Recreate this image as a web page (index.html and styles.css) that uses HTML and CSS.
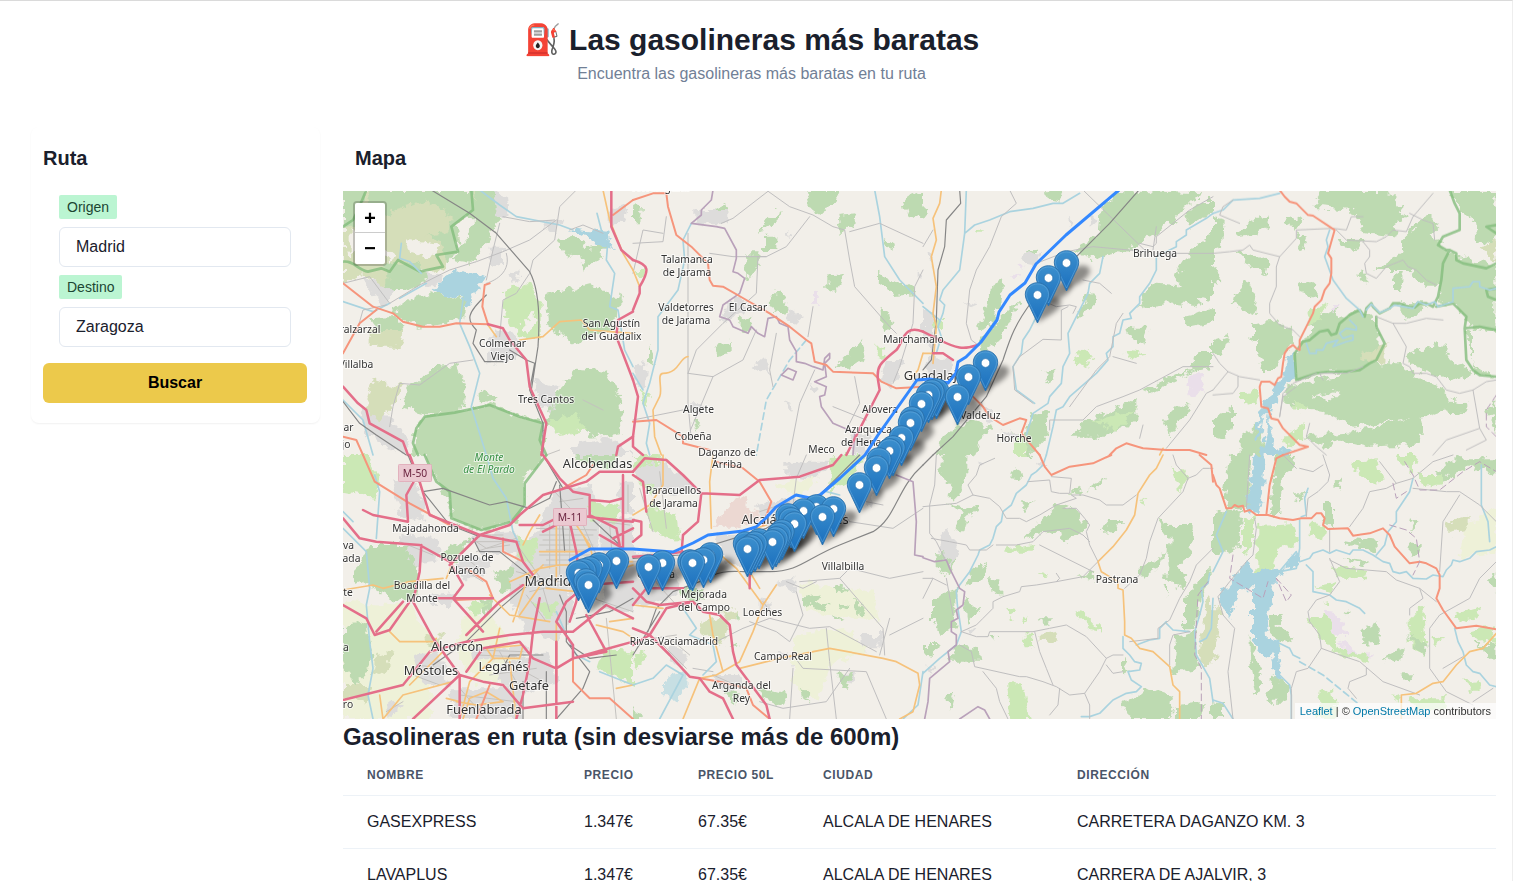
FILE: index.html
```html
<!DOCTYPE html>
<html lang="es">
<head>
<meta charset="utf-8">
<title>Las gasolineras más baratas</title>
<link rel="stylesheet" href="styles.css">
</head>
<body>
<div class="page">
<header class="hero"><h1>⛽ Las gasolineras más baratas</h1><p>Encuentra las gasolineras más baratas en tu ruta</p></header>
<main class="layout">
<aside class="card">
<h2>Ruta</h2>
<div class="fields">
<span class="tag">Origen</span><div class="input">Madrid</div>
<span class="tag">Destino</span><div class="input">Zaragoza</div>
</div>
<button class="buscar">Buscar</button>
</aside>
<section class="content">
<h2 class="map-title">Mapa</h2>
<div class="map">
<svg class="tiles" width="1153" height="528" viewBox="0 0 1153 528">
<defs>
<filter id="rough" filterUnits="userSpaceOnUse" x="-10" y="-10" width="1180" height="550"><feTurbulence type="fractalNoise" baseFrequency=".11" numOctaves="3" seed="4"/><feDisplacementMap in="SourceGraphic" scale="13" xChannelSelector="R" yChannelSelector="G"/></filter>
<filter id="blur" x="-50%" y="-50%" width="200%" height="200%"><feGaussianBlur stdDeviation="2.4"/></filter>
<linearGradient id="blue" x1="0" y1="0" x2="0" y2="1"><stop offset="0" stop-color="#3c8fcd"/><stop offset="1" stop-color="#1a6fbe"/></linearGradient>
<g id="pin"><path d="M0-12.3C-7-12.3-12.2-7-12.2-.6-12.2 3-10.4 6.3-8.7 9.6L0 28 8.7 9.6C10.4 6.3 12.2 3 12.2-.6 12.2-7 7-12.3 0-12.3Z" fill="url(#blue)" stroke="#2b72ab" stroke-width=".9"/><path d="M0-11C-6.4-11-11-6.2-11-.6-11 2.8-9.3 6-7.6 9.2L0 25 7.6 9.2C9.3 6 11 2.8 11-.6 11-6.2 6.4-11 0-11Z" fill="none" stroke="#64a9dc" stroke-width=".8" opacity=".7"/><circle r="4.4" fill="#fff" stroke="#2d76b4" stroke-width=".8"/></g>
<path id="shade" d="M0 28C2 18 3 10 8 6 14 0 24 2 24 8 23 16 10 21 0 28Z" opacity=".42"/>
</defs>
<g class="land" filter="url(#rough)">
<g transform="translate(0 -1) scale(.33333)">
<path class="h" d="M0 0H420L400 70 340 105 350 165 290 250 180 220 130 300 60 250 0 280Z"/>
<path class="f" d="M80 0H390L400 80 340 95 350 170 320 215 290 150 200 130 110 160 60 90ZM400 0H455L470 90 430 160 390 220 330 210 380 130ZM0 0H60V90L0 120ZM130 220 230 215 260 270 190 300 130 300Z"/>
<path class="h" d="M150 60 260 30 330 80 300 130 200 150 120 170 90 110Z"/>
<path class="e" d="M20 120 110 130 130 180 70 205 20 190ZM190 150 290 165 265 205 200 185ZM110 160 160 200 140 220Z"/>
<path class="u" d="M60 260 150 300 130 345 80 310ZM450 0 495 20 500 80 460 75ZM440 170 480 170 480 230 440 220ZM245 250 300 255 290 280 250 285ZM570 570 640 590 635 670 590 650ZM455 420 520 435 530 510 430 520 430 485ZM800 60 850 50 840 100 800 105ZM610 95 655 95 640 135 605 115ZM500 240 525 245 515 280ZM50 660 110 650 200 750 180 795 80 740ZM690 765 795 740 870 795H690Z"/>
<path class="w" d="M265 300 335 240 430 265 375 345 355 325 280 305ZM680 115 790 125 810 180 780 175 740 145Z"/>
<path class="f" d="M195 330 280 305 365 330 360 390 230 410 140 370ZM610 315 740 280 840 330 800 420 690 460 620 410ZM640 150 690 140 740 170 790 165 770 200 720 245 710 200 660 190ZM280 530 340 525 365 590 350 670 240 670 170 650 200 590ZM700 530 790 540 830 620 840 730 740 740 690 690 610 700 640 610ZM215 720 245 680 340 665 440 645 530 680 600 700V795H210ZM75 385 165 380 180 430 120 440ZM410 605 440 615 470 615 450 640 410 635Z"/>
<path class="h" d="M90 570 180 590 150 650 110 700 60 660ZM80 420 180 420 170 470 80 470Z"/>
<path class="g" d="M480 310 560 275 590 340 590 450 550 450 490 390ZM620 690 700 675 730 720 640 740Z"/>
<path class="e" d="M570 360 575 400 550 430 540 395Z"/>
</g>
<g transform="translate(290 -1) scale(.33333)">
<path class="f" d="M0 50 30 55 20 100 0 100ZM220 70 280 40 290 70 230 90ZM390 100 440 60 435 85 385 125ZM520 0 620 0 600 50 570 60 540 75ZM610 75 670 70 660 110 620 130ZM390 140 430 140 430 180 390 180ZM340 190 380 190 370 250 340 270ZM810 30 870 10V85L820 70ZM750 140 780 165 765 190ZM580 260 630 255 610 305 580 290ZM735 245 850 310 790 315 735 275ZM410 335 445 295 470 350 450 375 420 365ZM745 355 775 380 780 410 750 420ZM320 390 355 380 355 430 325 420ZM250 465 290 455 290 490 260 500ZM610 530 690 445 700 500 640 540ZM45 465 65 490 60 540 45 510ZM180 690 200 690 195 720Z"/>
<path class="u" d="M190 60 290 60 280 100 190 100ZM280 330 340 330 330 370 270 390ZM465 355 500 380 490 405 455 390ZM365 525 395 500 410 560ZM10 515 40 520 35 590 5 590ZM755 510 815 510 780 590 740 570ZM170 640 215 640 200 670ZM525 580 570 590 545 615ZM450 630 485 640 480 665ZM860 240V270L870 250ZM655 730 720 735 690 795 650 790ZM850 550H870V590H840ZM480 110 460 150 460 130Z"/>
<path class="l" d="M540 305 555 300 555 335 540 335Z"/>
<path class="g" d="M20 600 50 620 50 655 30 650ZM730 470 750 470 755 500 735 495ZM15 240 35 240 35 265 20 265Z"/>
</g>
<g transform="translate(580 -1) scale(.33333)">
<path class="f" d="M530 60 590 0 830 10 740 100 650 160 600 185 520 180ZM450 180 520 140 560 190 520 210ZM375 0 415 5 410 35 385 30ZM820 30 870 30V70L800 110 785 90ZM780 210 870 120V330L800 320 760 270ZM640 360 680 280 760 285 820 310 830 350 740 340 690 345ZM205 290 235 270 230 330 215 400 160 420 190 350ZM165 460 290 330 230 450 180 490ZM300 185 340 175 335 210 310 215ZM460 390 500 300 520 330 490 365ZM610 410 680 410 660 460 615 440ZM780 380 870 360V395L800 410ZM360 540 400 530 400 570 375 575ZM660 600 770 550 820 535 720 590 680 610ZM805 510 840 480 870 480V530L810 545ZM500 690 640 630 640 690 540 740 440 740ZM720 690 770 640 800 650 740 740ZM330 670 375 670 370 740 320 795H280L300 735ZM60 740 140 690 200 710 150 795H40ZM0 40 15 70 0 90Z"/>
<path class="g" d="M470 480 510 490 490 530 460 520ZM500 695 640 660 580 720ZM605 485 665 490 650 510 610 500ZM30 380 60 390 60 420 30 420ZM160 115 185 125 160 125ZM270 730 320 740 310 795H270Z"/>
<path class="u" d="M300 190 355 190 345 225 310 220ZM0 360 30 370 30 470 0 460ZM20 500 90 505 80 550 40 570 0 540ZM170 640 210 660 210 700 180 690ZM230 715 300 740 265 750ZM120 330 165 340 140 350ZM500 80 525 90 500 110ZM10 190 30 195 25 225ZM435 80 455 100 440 110Z"/>
<path class="l" d="M265 250 285 255 280 270ZM290 230 305 230 300 245ZM800 550 835 550 845 600 810 615 790 590Z"/>
</g>
<g transform="translate(870 -1) scale(.33333)">
<path class="f" d="M0 80 35 90 30 170 0 180ZM70 130 160 70 170 110 120 135 80 140ZM300 50 330 0H520L580 80 540 110 550 140 460 130 420 60ZM370 150 450 150 430 180 390 175ZM570 150 640 70 680 110 650 140 700 180 690 290 640 290 590 240 480 240 570 190ZM710 0H850V170L790 150 780 90 740 60ZM70 180 170 215 160 250 100 220ZM250 130 285 140 270 185ZM100 265 130 320 120 375 50 345ZM210 75 270 90 240 130ZM120 400 200 390 250 440 180 540 150 540 120 440ZM0 235 20 230 10 280 0 280ZM0 450 45 435 30 490 0 490ZM690 180 850 230V430L770 410 720 340 670 330ZM760 425 780 420V520L850 560 790 555ZM245 490 290 430 360 400 390 380 440 360 480 380 500 440 500 510 440 540 320 550 250 570ZM570 500 680 460 720 510 780 550 710 570 620 540ZM220 590 360 560 460 520 560 520 600 550 700 600 720 650 640 680 420 710 330 660 220 650ZM400 730 620 680 630 760 470 770 390 750ZM270 740 430 725 390 750 330 770ZM0 690 60 650 60 710 30 750 0 740ZM80 740 140 700 150 795H80ZM260 280 300 280 320 320 270 310ZM430 250 460 240 460 285ZM560 340 640 340 620 370 570 385ZM540 260 570 240 560 300 540 300ZM700 630 760 640 760 670 700 665ZM300 400 370 350 380 390 300 430ZM820 660 850 630V730Z"/>
<path class="e" d="M735 150 775 145 780 200 740 205ZM788 430 850 430V540L802 530ZM500 400 560 420 570 510 500 460ZM300 620 380 600 350 630Z"/>
<path class="h" d="M440 500 520 460 510 520ZM800 180 850 150V210Z"/>
<path class="g" d="M300 360 340 340 320 390 280 410ZM90 610 130 600 120 650 90 640ZM240 640 290 650 260 670ZM210 750 270 700 270 750 220 770Z"/>
<path class="l" d="M350 345 375 345 365 370Z"/>
<path class="w" d="M245 480 245 570 220 580 180 650 140 690 150 640 210 560 225 500ZM165 660 190 795H140L160 720ZM170 780 245 775 230 795H160ZM120 750 145 650 150 680 135 750Z"/>
</g>
<g transform="translate(0 264) scale(.33333)">
<path class="g" d="M0 0H70L110 60 100 130 0 110Z"/><path class="y" d="M0 440 200 450 270 560 260 792H0ZM360 480 440 480 560 630 500 680 400 680 340 590Z"/>
<path class="f" d="M245 0H560L600 0 540 70 550 130 510 200 415 225 330 200 320 140 280 80ZM80 270 230 270 220 430 160 440 30 370ZM320 270 390 250 330 320 280 300ZM455 350 540 330 530 400 470 410ZM0 510 70 500 90 600 40 700 0 620ZM690 0H830L800 40 720 20ZM410 430 450 430 430 480Z"/>
<path class="h" d="M100 600 150 590 120 660 90 650ZM0 690 90 690 70 740 0 720ZM240 550 300 540 290 590Z"/>
<path class="u" d="M145 80 200 70 250 140 240 200 170 180ZM380 240 520 230 540 290 460 300 410 290ZM520 300 590 210 640 100 740 90 770 190 760 330 680 360 690 470 640 560 540 520 500 410ZM340 310 450 310 420 370 350 370ZM210 600 290 590 320 690 240 700ZM380 580 560 570 540 610 390 610ZM770 190 870 190V470L780 460ZM470 630 610 590 650 680 540 720 470 690ZM320 700 540 700 530 792H330ZM250 420 340 410 330 450 260 450ZM830 80 870 80V180L830 170ZM170 240 290 250 280 320 210 330ZM130 740 180 750 130 792Z"/>
<path class="g" d="M520 250 580 260 570 330 530 310ZM730 140 830 150 820 200 750 190ZM560 440 650 450 620 490ZM780 580 870 590V690L760 640ZM360 450 430 445 400 490Z"/>
</g>
<g transform="translate(290 264) scale(.33333)">
<path class="g" d="M0 0H80L100 80 60 110 20 100ZM40 150 130 180 140 260 50 230ZM600 0H700L640 80 590 110ZM0 610 40 590 20 640Z"/>
<path class="y" d="M480 540 650 520 700 590 590 630 560 740 480 690ZM430 90 560 60 500 130ZM500 380 720 410 740 500 520 470Z"/>
<path class="u" d="M0 40 70 20 170 70 190 110 100 120 30 80ZM0 290 140 300 130 420 30 460 0 450ZM370 150 480 130 520 170 460 230 390 200ZM250 240 360 240 380 330 280 330ZM660 100 730 100 710 150ZM430 380 490 370 490 410ZM120 570 170 610 150 640 100 610ZM230 660 320 660 330 700 260 710ZM680 540 740 540 740 580 690 580ZM380 430 420 440 410 470 380 470ZM440 590 490 600 480 620 440 610ZM630 650 670 650 660 690ZM460 20 600 20 550 70 460 60Z"/>
<path class="i" d="M240 215 320 120 345 130 340 160 380 170 380 200 310 215Z"/>
<path class="f" d="M130 400 200 400 210 440 150 430ZM290 470 320 460 320 500ZM270 700 320 710 310 750ZM0 760 30 780 20 792H0ZM380 700 460 720 450 750 380 730ZM610 660 660 650 640 710ZM510 430 560 415 550 440 590 450 570 470 510 450ZM280 570 320 560 310 580ZM600 390 640 395 620 420ZM620 440 650 450 630 460ZM660 430 700 460 690 485 670 470ZM510 700 530 710 520 740ZM600 480 630 490 610 500Z"/>
<path class="h" d="M200 500 290 490 270 570 220 540ZM250 470 320 460 310 500Z"/>
<path class="w" d="M90 670 160 650 165 690 130 740 90 710Z" opacity=".6"/>
</g>
<g transform="translate(580 264) scale(.33333)">
<path class="f" d="M60 0H130V60L110 130 70 130 90 100 50 50ZM60 145 170 160 130 190 120 230 100 210 120 170ZM300 255 350 200 400 150 450 160 490 220 440 260 400 230 340 240ZM270 40 290 45 295 75 265 70ZM440 110 480 100 460 120ZM490 110 550 65 530 100ZM290 145 335 145 310 170ZM530 235 560 195 600 195 580 230ZM700 190 740 210 810 210 800 310 770 330 790 370 780 410 730 370 740 250ZM725 390 735 390 735 425ZM655 370 650 340 730 290 700 340 670 360ZM140 350 190 320 170 380 130 390ZM195 370 235 370 235 425 200 410ZM40 290 100 300 80 370 45 340ZM120 430 175 460 130 500ZM30 430 100 400 100 520 50 540 30 500ZM100 570 170 580 175 620 80 620ZM0 570 50 570 30 600 0 595ZM190 540 220 540 210 560ZM600 600 620 650 600 655ZM780 440 860 340H870L830 430 820 520 780 520ZM760 540 815 530 825 640 750 655ZM600 740 690 700 750 720 740 792H620ZM750 755 840 745 830 792H750ZM470 370 510 350 515 380ZM70 720 95 720 80 770ZM350 490 390 490 380 510Z"/>
<path class="g" d="M250 280 340 270 330 290 250 290ZM345 350 375 355 360 375ZM450 470 490 480 540 530 500 520ZM245 460 280 465 270 490ZM295 545 330 545 330 580 305 580ZM255 685 300 685 310 740 320 792H265ZM755 40 800 60 770 115ZM295 485 315 490 310 505ZM655 130 670 140 660 150Z"/>
<path class="h" d="M850 420 870 430V630H830ZM350 540 400 530 390 560 350 560Z"/>
<path class="u" d="M50 240 75 225 85 260 110 280 100 310 80 330 50 280ZM165 15 185 25 170 40ZM135 520 160 530 150 545ZM10 625 40 640 20 660ZM345 20 365 30 350 40Z"/>
</g>
<g transform="translate(870 264) scale(.33333)">
<path class="f" d="M50 0H115L105 160 50 160 30 120ZM185 0H245L240 40 210 60 205 180 170 180ZM0 170 90 165 80 270 20 300 0 300ZM330 140 360 140 360 220 330 190ZM240 115 285 115 260 145ZM360 90 385 60 380 110ZM670 40 740 10H850V60L760 30 700 75 670 80Z"/>
<path class="h" d="M700 200 770 180 770 230 700 240ZM0 470 20 450 15 540 0 630Z"/><path class="y" d="M760 210 850 160V290L740 310Z"/>
<path class="g" d="M130 210 240 205 250 260 190 290 180 350 130 350ZM90 190 120 190 120 270 90 300ZM290 200 340 210 330 250 290 240ZM415 20 490 10 510 80 470 85 420 40ZM610 60 690 60 690 90 630 100ZM355 330 460 345 450 370 370 360ZM310 395 380 380 350 410ZM280 490 340 480 360 530 380 580 470 605 470 620 370 600 310 530ZM590 500 630 450 640 610 590 560ZM720 480 805 455 790 490 740 500ZM770 530 840 510 850 570 790 560ZM650 545 690 550 670 580ZM755 680 800 675 800 710 770 710ZM320 710 360 700 370 792H310ZM525 715 560 720 560 740ZM590 730 700 730 690 770 610 760ZM325 440 345 435 345 455ZM550 0H610L600 60 560 20Z"/>
<path class="f" d="M165 480 210 480 190 510 240 550 200 570 170 530ZM110 540 150 690 130 720 110 600ZM180 660 230 700 220 740 160 740ZM455 520 490 505 505 565 450 570ZM505 610 570 575 560 610 530 620ZM590 270 620 260 620 300 590 310ZM820 370 850 355V410ZM580 540 640 560 640 610ZM565 655 600 655 590 680ZM390 470 410 475 400 490ZM0 745 30 750 30 792H0ZM600 190 620 200 590 230ZM790 570 850 570V620ZM390 250 500 260 480 285 410 270ZM380 310 470 320 450 330Z"/>
<path class="l" d="M335 470 370 475 400 540 365 540ZM380 550 440 600 390 585ZM460 600 485 595 470 610Z"/>
<path class="w" d="M125 0H155L150 110 135 180 100 165ZM15 425 100 320 120 340 120 400 80 400 50 500ZM120 350 210 340 190 370 180 440 160 480 165 550 200 560 195 600 210 680 190 670 180 610 140 590 120 560ZM240 300 265 290 265 320 230 350 210 340Z"/>
</g></g>
<g class="lines">
<g transform="translate(0 -1) scale(.33333)">
<path class="b" d="M0 215C30 210 45 240 75 245L115 235 140 245 165 210 230 245 300 230 280 195 345 185 325 110 390 60 385 0M0 110 30 90 45 60 70 0M225 795 210 760 220 715 245 680 335 668 440 645 530 680 600 700 590 750 610 795"/>
<path class="v" d="M410 0 470 45 520 80 650 105 690 120M235 250 200 215 170 205 175 160M762 70 775 120 795 150 790 210 815 250 800 350 825 360 845 480 870 530M360 330 350 400 380 470 410 550 385 650 430 795M140 340 90 365 0 335M170 325 250 280M0 630 60 690 90 795"/>
<path class="r" d="M700 0 650 50 635 150 570 210 560 250 520 310 480 330 470 440M640 90 560 150 480 185 400 215 320 240 230 285 140 340 80 260 0 280M470 100 450 180 430 270M130 345 60 360 40 430M390 510 320 520 230 585 170 580 150 650 140 710M680 120 720 105 780 130M490 190C510 260 430 280 430 280M635 90 560 95 480 80"/>
<path class="k" d="M265 0 380 70 460 130 560 245C590 300 590 400 585 470L565 600M430 315C370 370 370 390 400 420L390 460 425 515 480 515M500 480 550 510 575 520 560 600 600 700 600 795M0 635 50 700 100 735 190 795"/>
<path class="p" d="M780 0 800 90 840 190 870 240M530 450 600 440 650 395 715 390 740 420 870 430M435 405 460 440"/>
<path class="t" d="M0 280 90 350 150 370 180 395 240 410 290 410 340 400 435 403 418 350 425 285 440 280M100 360 50 400 0 490M810 75 870 30M0 740 40 750 60 795"/>
<path class="m" d="M805 0 805 110 835 180 870 210M870 365 825 390 820 440 870 570M435 403 480 415 500 450 550 510 560 590 610 700 595 795M0 590 45 640 70 660 80 700 180 755 195 795M870 740 825 770 820 795"/>
<path class="s" d="M720 630 780 660M610 795 650 780"/>
</g>
<g transform="translate(290 -1) scale(.33333)">
<path class="v" d="M725 0 740 80 755 200 800 270 870 340M175 100 150 150 155 210 135 300 75 380 75 480 50 580 30 640 50 700 40 760 50 795M0 550 30 600"/><path class="v dash" d="M520 450 470 510 400 630 370 795"/>
<path class="r" d="M0 160 90 155 100 80M0 250 30 120 90 130M410 0 300 85 265 100M530 80 460 170 400 200 375 200 370 310 270 400 190 480 165 550M635 120 650 210 665 290 700 330 770 410 790 430M870 160 740 100 650 125M430 430 410 540 420 590M165 130V640L175 750M0 690 150 660M165 550 240 560 330 510 370 420M230 190 300 200 400 200M665 560 680 640 640 720M540 350 525 440M545 540 500 640 470 795M870 240 845 290 840 400 800 530 780 580M600 650 700 690"/>
<path class="r" d="M400 0 470 50 540 75 600 110 635 120M240 560 160 750"/>
<path class="a" d="M240 0 235 30 205 60 205 75 175 100 250 110 275 115 310 180 310 205 300 245 315 250 335 265 320 310 270 345 260 380 290 390 300 410 345 430 355 410 375 430 395 440 405 385 430 380 440 400 465 410 470 450 490 485 490 515 515 520 540 530 570 540 575 505 590 490 590 505 575 520 580 560 545 575 580 590 575 615 560 620 565 650 600 700 635 715 665 730 660 795M465 535 490 545 480 570 445 555Z"/>
<path class="p" d="M165 500C140 500 140 550 90 550 70 550 90 600 80 620L60 660 65 740 85 795M0 240 20 290M870 490 855 540 830 570"/>
<path class="t" d="M0 30 60 10 100 10 105 50 130 135 175 170 225 220 230 270 240 287 270 290 340 330 410 370 470 410 520 450 535 460 545 515 580 525 600 545 720 550 745 575 790 595 870 590M0 695 70 690 150 740 150 760 230 780"/>
<path class="m" d="M0 210C50 225 50 240 20 290L20 310 0 360M0 570 15 620 0 740 0 770 30 795M870 425C810 400 810 460 790 480 740 520 730 530 735 570L740 600 640 795"/>
</g>
<g transform="translate(580 -1) scale(.33333)">
<path class="v" d="M130 0 125 130 110 240 60 300 50 330 65 345 60 370 45 410 55 440 40 490M125 130 155 105 200 90 260 65 330 55 390 40 420 40 470 10M540 200 530 250 500 280 495 310 460 380 435 430 440 490 420 530 415 580 380 620 375 640 330 670 310 735M870 70 850 85 790 120 790 135 760 155 760 170 740 180 700 200 700 240 680 280 650 320 650 340 620 370 625 385 600 390 590 430 570 440 570 470 550 490 555 510 520 550 440 620 420 650 400 660 390 710 370 795M340 380 320 420 300 450 295 490 270 530 280 600 335 640M0 350 50 390"/>
<path class="r" d="M260 0 280 40 235 80 200 170 160 240 140 300 130 400 145 450 165 465M340 220 430 185 510 170 670 185 480 0M650 160 690 170 700 160 700 140 800 60 870 20M700 190 870 190M435 350 415 360 415 450 360 448 290 500 270 530 275 600 330 640M0 170 30 120M365 335 400 350 440 345 460 350 450 370M600 370 580 400 560 500 520 540 440 650M480 270 530 280 565 310M870 530 780 530 650 600 600 620 520 650 480 690 380 690 380 720M570 500 640 520M650 745 660 705M700 110 690 180M870 600 850 610 800 690 730 775"/>
<path class="k" d="M648 0 560 100 470 190 330 330C270 410 260 450 240 510L190 620 90 740 30 795M110 0 113 40 70 90 65 170 45 240 40 390 25 510 0 540"/>
<path class="p" d="M55 0 50 40 30 85 40 150 25 200 40 290 30 370 40 410 30 520M0 490 30 490M720 775 710 795"/>
<path class="t" d="M150 620 180 650 200 680 240 705 290 685 310 690 295 730 350 795M560 795 580 775 610 760 660 775 730 780 800 780 850 795"/>
<path class="m" d="M0 425 50 450C100 475 120 480 165 465M30 490 60 490 90 510"/>
</g>
<g transform="translate(870 -1) scale(.33333)">
<path class="b" d="M710 0 725 40 740 70 740 120 690 140 675 165 700 180 710 180 690 220 685 270 675 320 660 350 640 340 620 340 605 352 590 352 560 340 540 340 530 355 500 370 480 350 475 340 460 355 455 380 440 360 420 370 410 375 380 400 370 430 355 435 345 420 320 425 290 450 270 455 245 490 250 570 310 550 350 545 400 545 440 540 470 520 490 510 515 460 490 410 490 380M710 180 730 190 730 210 750 220 820 235 850 220M850 105 820 110 850 130M670 350 720 340 750 370 760 380 755 415 800 410 850 420M755 415 760 510 780 540 800 555 850 560M850 295 820 300 825 320 850 330"/>
<path class="v" d="M0 70 30 60 60 30 140 25 200 10M350 120 340 150 345 170 335 200 360 270 400 325 440 360 450 380M410 390 430 410 430 420 400 415 380 430 390 445 420 435 420 450 400 455 360 470 375 450 340 460 330 480 310 480 310 490 290 490 280 460M720 330V295L770 290 780 275 800 275 800 290 830 300 850 295M460 360 475 342 500 368 530 355 545 345 600 355 615 335 640 345 665 335 675 350 720 335"/>
<path class="r" d="M0 190 50 185 90 180 110 165 120 180 200 200 190 230 190 290 170 340 170 370 200 405 240 420 260 440M60 30 30 50 20 75 80 100M200 200 250 145 250 120 360 115 400 120 415 80 450 80M370 120 400 150 490 155 520 140 540 120 580 125 600 80 660 10M590 70 630 90 660 100 665 150M450 155 470 180 470 200 455 220 460 250 490 265 520 230 570 210 585 230 610 240 640 270 670 285M490 380 540 400 580 400 640 385 690 390M540 400 580 470 570 520 590 530 600 550 640 550 670 560 700 600 740 610 780 600 820 575 850 570M780 600 800 715 700 750 660 795M0 600 45 545 80 560 140 570M0 490 20 520 45 545M75 560 75 590 60 610 0 615M250 590 210 620 200 680M310 550 240 580 210 610 200 680M290 700 280 740 310 770 340 795M450 530 400 550 320 550 330 570M800 715 820 750 760 780"/>
<path class="t" d="M200 0 215 20 230 35 250 40 270 60 285 75 300 77 365 120 345 190 355 205 355 250 350 280 335 300 325 330 305 350 300 370 260 450 260 480 250 475 240 465 225 475 215 490 210 520 205 560 195 565 185 585 170 575 145 575 140 590 145 650 165 655 175 685 195 690 210 715 260 765 285 770 210 795"/>
<path class="a dash" d="M850 615 820 660 820 710 850 740"/>
</g>
<g transform="translate(0 264) scale(.33333)">
<path class="b" d="M245 0 280 80 320 110 325 190 415 225 505 200 545 150 545 85 610 0"/>
<path class="v" d="M430 0 450 70 490 130 510 230 530 270M95 60 110 110 100 250M0 220 70 290 80 400 70 450 80 560 90 640 75 720 90 792M640 470 670 540 700 600 740 620M0 170 30 200M770 650 870 690"/>
<path class="s" d="M590 240H750M590 270H750M590 300H740M600 330H750M620 210V340M650 190V360M680 180V380M520 350 640 380 780 370M530 280 600 380M560 410 690 380M370 260 530 260M400 290 520 250M530 390 640 390M720 210 760 300M800 210 810 330M470 590 530 700M350 700 430 792M490 620 600 680M130 770 180 740M750 430 870 470M440 660 580 640M790 490 820 792M600 400 620 470M210 660 290 690M340 330 420 380M370 310 420 350M580 220 760 225M600 255H740M610 285H740M610 315H740M635 110 700 180M650 140 720 130M400 260 430 280 500 270M400 240 480 240M840 100V180M855 90V170M780 200 860 210M550 420 610 500M170 260 270 300M350 720 520 740M220 630 300 640M400 585 540 590M400 600 520 605"/>
<path class="k" d="M195 0 240 110 320 210 410 245M240 110 300 100 440 150 490 140 560 160 620 130 640 80M650 90 665 290M600 0 660 100M270 630 370 560 470 460 540 400 600 370M650 420 670 470 670 560 740 650 720 700 640 792M480 640 500 600 600 600M540 680 540 792M610 650 610 792M750 195 830 270M390 250 410 290 470 290 570 370M700 490 800 470 870 430M680 570 740 610 820 600"/>
<path class="p" d="M0 405 90 390 120 400 200 380 300 370M140 530 170 560 270 560 280 550M500 380 590 340 650 330 720 330 780 320 870 320M590 180 560 230 540 270M510 500 550 380 600 330M590 290H730M720 240 740 280M640 200 640 380M440 420 500 480 620 500M530 480 600 380M430 580 540 570 530 610 450 610 430 580M470 520 450 610 380 680 350 792M500 620 520 792M340 740 400 750 480 740M360 792 380 730 430 710 480 740M310 730 350 740M610 400 700 410 760 430M640 500 V660M330 320 310 370M870 690 820 700M110 720 120 792 180 720 330 680M760 510 840 530 870 550M800 500 870 490M790 320 810 350 870 330M700 210 740 270 750 310M200 690 300 590"/>
<path class="t" d="M60 0 95 80 200 145 320 210M370 340 430 380 450 430 340 435M640 560 640 680M480 250 480 290 540 320M440 690 400 792M660 100 730 60 750 30M690 610 690 680 740 730 800 730 870 792"/>
<path class="m" d="M200 0 230 80 260 180 410 240 500 210 530 180 600 120 730 80 770 50 870 50M215 75 190 120 195 200 90 180 60 165M0 190 50 250 100 260 230 270 320 320 360 390 330 430 420 530M235 270 230 350 210 440 270 550 350 660 350 792M0 450 70 490 95 540 140 525 200 440M0 735 180 690 260 590 370 560 500 540 600 530 690 530 790 450 870 490M320 330 410 240 520 260 540 320 570 360M370 650 420 580 530 560 570 610 640 640 690 610 690 570 640 500 M540 390 470 440 370 540M680 200 700 290 710 370 700 440 680 500M740 120V180L820 220 830 270M740 120 690 110 650 70 600 0M840 60V280M810 250 870 220M600 230 700 180 770 190 870 200M590 430 570 530 560 620 540 720 520 792M640 560 640 792M280 430 450 430 M350 660 420 680 480 690 540 760 690 740M690 610 870 560M730 480 790 590 690 610M350 660 210 792M640 500 670 440 730 390 870 380M770 240 840 280M530 210 600 210 640 190M740 135 800 140 840 130M180 440 100 530"/>
</g>
<g transform="translate(290 264) scale(.33333)">
<path class="s" d="M20 100 60 230M80 50 100 220M0 320 100 320M40 350 130 450M90 570 160 640M110 550 170 600M240 660 330 700M380 170 470 140M400 210 520 150M300 250 380 320M60 360 80 400M130 540 60 550"/>
<path class="r" d="M520 0 490 70 480 150 500 230M600 130 650 200 780 220 870 160M700 140 750 150M250 560 330 520 410 490 530 520 590 515 730 590M490 410 510 480 480 540 470 560 430 530 350 500M550 380 510 400 460 380M500 380 620 370 650 340 770 370 870 350M620 370 750 520 755 600M580 520 590 620 610 792M480 600 510 640 700 650 760 792M650 640 580 740 450 760 380 740M770 490 740 600M770 540 870 490M180 640 240 650M480 640 470 792M420 480 390 440"/>
<path class="v" d="M0 690 60 670 100 630 150 660 80 792M150 460 190 520 170 540 240 570 250 620 210 660M870 650 855 750 810 792M580 110 620 120"/>
<path class="k" d="M45 530 70 460 120 410 200 380C270 340 300 350 340 350H410C500 350 520 310 620 270L720 230C790 190 790 100 870 30M0 310 140 300 400 220 550 130 680 0M80 470 0 600"/>
<path class="p" d="M90 0 90 90 50 150 0 180M240 0 230 80 235 220M240 280 310 340 390 450 360 530 320 620 250 660 200 670 150 792M230 480 240 540 270 650M320 640 440 610 590 580 750 610 790 620 855 655 860 690 840 770 800 792M430 390 390 450M0 450 90 460M380 400 350 350M370 220 400 210"/>
<path class="t" d="M250 20 330 40 380 80 415 140 390 210M200 670 260 680 340 700 360 750 410 792"/>
<path class="m" d="M0 50 35 10 100 15 150 60 205 115 320 120 380 75 500 65 600 30 625 0M205 115 195 200 150 240 145 300M0 195 25 200 25 240 0 260M0 60 30 80 40 170M0 400 40 440 80 450 180 440 210 470 260 480 290 510 300 590 310 630 400 750 410 792M180 440 100 460 50 540 110 600 170 665 200 670 230 710 270 730 300 792M0 520 50 540 0 570M350 360 350 400M0 450 40 400 30 380M60 400 150 400M0 305 80 300 150 290"/>
<path class="a" d="M790 60 840 80 850 200 845 300 870 305"/>
</g>
<g transform="translate(580 264) scale(.33333)">
<path class="v" d="M370 0 360 30 340 50 325 60 310 90 280 115 265 150 240 170 235 200 220 215 210 250 200 270 170 285 165 300 140 350 110 390 100 410 103 450 115 530 100 570 50 610 0 655M600 545 600 580 620 600 635 620 655 625 650 645 615 650 625 675 655 695 640 710 610 715 570 735 530 775 500 785 475 785M860 355 855 385 835 400 840 440 830 480 815 530 820 600 860 670 870 740M730 505 750 525 800 530M870 430 865 520 850 550 830 560M640 570 680 555 710 550 710 520 730 500"/>
<path class="r" d="M40 0 35 90 20 150 20 235 40 260 70 320M0 155 100 145 150 120 200 130 230 155 250 190 290 190 310 200 350 180 400 150 460 130 445 120 480 120 530 135 550 150 600 150 640 120M215 10 170 30 160 60 135 90 150 120M220 270 280 270 330 260 360 230 440 220 480 240 500 260M350 270 450 320 510 350M210 270 190 285 140 285 130 270 80 260 25 250M115 530 160 510 180 490 210 460 210 440 240 425 290 410 295 395 340 390 400 380 480 365 525 320 500 270 490 230 500 210 485 190 460 160 420 160M115 530 160 545 195 545 200 530 330 530 380 520 430 510 490 545 550 610 530 650 485 715 500 750 500 792M550 610 570 600 600 600M110 570 145 590 155 635 290 665 310 665 360 680 400 695 440 720 485 715M180 650 220 700 230 740 255 792M335 530 350 590 370 640 390 690M410 700 405 750 380 780M550 630 570 655 600 650M750 0 760 30 795 70 780 110 705 190 680 260 670 310 650 360 605 400M795 70 820 60 840 40 860 40 870 40M870 280 820 330 800 380 770 430 740 495 705 520 705 550 620 560M800 530 750 540 740 570 740 630M315 80 380 75 385 110 410 115 440 115 445 70 385 65M0 370 30 370 0 430M400 355 410 370 400 380M30 370 70 390M70 370 90 480"/>
<path class="k" d="M0 30 30 0"/>
<path class="p" d="M720 0 700 40 680 60 645 115 635 180 610 225 570 275 525 320 535 350 585 380 585 400 600 405 605 500 605 540 625 550 650 580 690 590 740 635 750 690 770 710V792"/>
<path class="t" d="M350 0 365 35 385 60 440 35 510 25 565 0M830 0 865 30 870 80"/>
<path class="a" d="M0 308 35 320 70 315 80 340 110 400 125 410 120 450 100 465 105 490 85 500 85 530 100 540 100 570 75 590 80 620 20 670 15 740 5 792M110 792 165 755 185 765 200 792"/><path class="a dash" d="M855 380 825 420 815 600 835 640V792"/>
</g>
<g transform="translate(870 264) scale(.33333)">
<path class="v" d="M0 350 30 290 10 240 40 170M260 195 260 280 250 340 200 350M190 360 250 290 260 320 290 310 300 295 330 285 350 295 370 285 410 298 420 285 450 285 480 300 510 320 530 325 540 350 560 355 580 350 600 370 640 372 660 360 690 365 700 345 715 330 720 315 740 320 770 310 790 290 830 285 850 275M280 330 300 350 300 410 350 420 370 435 400 440 440 460 455 475M600 70 590 110 550 170 550 200 525 230 515 270 490 300M285 100 275 130 280 180 265 185M725 520 735 560 750 590 760 630 780 650 800 655 830 690 850 695M805 30 805 150 825 200 830 260M190 560 230 580 240 600 260 610M200 660 230 690 235 720 235 792M0 735 30 745 60 792"/><path class="v dash" d="M260 620 330 660 440 750"/>
<path class="r" d="M110 0 100 160M125 190 130 220 120 300 100 320 50 380 15 425 30 480 65 520 45 650 50 700 60 792M330 0 350 60 345 80 315 110 285 130 280 185M330 30 300 50 260 40M410 215 450 160 470 110 520 100 550 85 600 70 660 20 720 0M550 85 500 20M600 100 700 110 740 110 800 150 850 200M350 220V290M350 310 380 380 350 420 310 435 285 470 290 500 320 540 325 580 380 600 440 620 510 680 620 720M325 580 285 640 250 650 235 700 235 792M460 640 460 660 410 680 405 700 430 730M850 320 800 370 770 430 680 480 650 520 650 640 700 710 780 750M350 315 400 340 520 350 550 375 620 400 670 440M620 400 630 430 590 460 590 480M740 120 690 200 680 350M750 605 690 640M840 700 780 740M210 0 250 40"/>
<path class="p" d="M565 792V720L610 715 660 685 690 680 730 630 770 590 810 580 850 535"/>
<path class="t" d="M0 60 10 90 20 100 40 160 55 160 65 150 75 155 90 152 95 170 110 165 130 180 165 180 200 190 240 195 265 190 295 190 310 175 325 175 335 190 330 210 345 222 405 220 420 242 470 235 510 220 530 240 545 275 590 325 620 320 640 325 670 340 680 360 680 400 670 430 690 465 730 520 790 512 850 523M160 180 170 90 190 10 210 0"/>
<path class="a dash" d="M60 300 50 370 150 430 165 380M190 370 235 420 220 440 190 370M540 85 550 130 580 110M575 20 600 60 620 105 680 105 750 50 800 20 850 50M530 210 580 225 610 250 620 320 600 360"/>
</g></g>
<g class="labels">
<text x="344" y="72">Talamanca</text><text x="344" y="85">de Jarama</text><text x="343" y="120">Valdetorres</text><text x="343" y="133">de Jarama</text><text x="405" y="120">El Casar</text><text x="268.500" y="136">San Agustín</text><text x="268.500" y="149">del Guadalix</text><text x="159.500" y="156">Colmenar</text><text x="159.500" y="169">Viejo</text><text x="203" y="212">Tres Cantos</text><text x="355.500" y="222">Algete</text><text x="350" y="249">Cobeña</text><text x="384" y="264.500">Daganzo de</text><text x="384" y="277">Arriba</text><text x="478.500" y="262">Meco</text><text x="570.500" y="152">Marchamalo</text><text x="812" y="66">Brihuega</text><text x="671" y="251">Horche</text><text x="637.500" y="228">Valdeluz</text><text x="537" y="222">Alovera</text><text x="525.500" y="242">Azuqueca</text><text x="525.500" y="255">de Henares</text><text x="330.500" y="303">Paracuellos</text><text x="330.500" y="316">de Jarama</text><text x="82.500" y="341">Majadahonda</text><text x="124" y="370">Pozuelo de</text><text x="124" y="383">Alarcón</text><text x="79" y="398">Boadilla del</text><text x="79" y="411">Monte</text><text x="361" y="407">Mejorada</text><text x="361" y="420">del Campo</text><text x="419.500" y="425">Loeches</text><text x="500" y="379">Villalbilla</text><text x="331" y="454">Rivas-Vaciamadrid</text><text x="440" y="469">Campo Real</text><text x="398.500" y="498">Arganda del</text><text x="398.500" y="511">Rey</text><text x="774" y="392">Pastrana</text><text x="17" y="142">ralzarzal</text><text x="13" y="177">Villalba</text><text x="5.500" y="240">ar</text><text x="3" y="257">jo</text><text x="5.500" y="358">va</text><text x="8.500" y="371">ada</text><text x="5" y="405">te</text><text x="3" y="460">a</text><text x="5" y="517">ro</text><text x="313" y="387">Coslada</text><text x="317" y="0">Torrelaguna</text>
<text class="big" x="254.500" y="277">Alcobendas</text><text class="big" x="114" y="460">Alcorcón</text><text class="big" x="88" y="484">Móstoles</text><text class="big" x="160.500" y="480">Leganés</text><text class="big" x="186" y="499">Getafe</text><text class="big" x="141" y="523">Fuenlabrada</text><text class="big" x="597" y="189">Guadalajara</text><text class="big" x="452" y="333">Alcalá de Henares</text><text class="capital" x="205" y="395">Madrid</text>
<text class="wood" x="146" y="270">Monte</text><text class="wood" x="146" y="282">de El Pardo</text>
<g class="shield"><rect x="55.500" y="273.500" width="33" height="17" rx="1"/><text x="72" y="286">M-50</text><rect x="210.500" y="317.500" width="33" height="17" rx="1"/><text x="227" y="330">M-11</text></g>
</g>
<path class="route" d="M776-1 723 44 693 73 682 92 667 104 656 121 654 129 638 151 623 166 615 171 613 182 605 192 587 188 574 189 535 244 522 264 497 287 477 304 467 307 453 304 433 316 423 327 413 336 400 340 365 344 350 352 330 361 290 358H247L227 369"/>
<g filter="url(#blur)"><use href="#shade" x="723" y="72"/><use href="#shade" x="705" y="87"/><use href="#shade" x="694" y="104"/><use href="#shade" x="642" y="172"/><use href="#shade" x="625" y="186"/><use href="#shade" x="614" y="206"/><use href="#shade" x="593" y="201"/><use href="#shade" x="585" y="203"/><use href="#shade" x="578" y="213"/><use href="#shade" x="567" y="232"/><use href="#shade" x="558" y="247"/><use href="#shade" x="546" y="260"/><use href="#shade" x="533" y="277"/><use href="#shade" x="516" y="294"/><use href="#shade" x="490" y="317"/><use href="#shade" x="479" y="326"/><use href="#shade" x="460" y="320"/><use href="#shade" x="451" y="333"/><use href="#shade" x="444" y="339"/><use href="#shade" x="437" y="344"/><use href="#shade" x="429" y="351"/><use href="#shade" x="415" y="354"/><use href="#shade" x="404" y="358"/><use href="#shade" x="367" y="364"/><use href="#shade" x="360" y="369"/><use href="#shade" x="349" y="372"/><use href="#shade" x="319" y="372"/><use href="#shade" x="305" y="376"/><use href="#shade" x="273" y="370"/><use href="#shade" x="256" y="374"/><use href="#shade" x="245" y="394"/></g>
<g><use href="#pin" x="723.500" y="72"/><use href="#pin" x="705.500" y="87"/><use href="#pin" x="694.500" y="104"/><use href="#pin" x="642.500" y="172"/><use href="#pin" x="625.500" y="186"/><use href="#pin" x="593.500" y="200"/><use href="#pin" x="589" y="201"/><use href="#pin" x="585.500" y="204"/><use href="#pin" x="614.500" y="206"/><use href="#pin" x="578.500" y="213"/><use href="#pin" x="569" y="228"/><use href="#pin" x="567.500" y="232"/><use href="#pin" x="558.500" y="247"/><use href="#pin" x="550" y="257"/><use href="#pin" x="546.500" y="260"/><use href="#pin" x="536" y="269"/><use href="#pin" x="533.500" y="277"/><use href="#pin" x="516.500" y="294"/><use href="#pin" x="473.500" y="316"/><use href="#pin" x="490.500" y="318"/><use href="#pin" x="460.500" y="320"/><use href="#pin" x="445" y="325"/><use href="#pin" x="479.500" y="326"/><use href="#pin" x="448" y="329"/><use href="#pin" x="451.500" y="333"/><use href="#pin" x="439" y="341"/><use href="#pin" x="436" y="344"/><use href="#pin" x="433" y="348"/><use href="#pin" x="416" y="350"/><use href="#pin" x="429.500" y="351"/><use href="#pin" x="402.500" y="353"/><use href="#pin" x="412" y="353"/><use href="#pin" x="408" y="356"/><use href="#pin" x="404.500" y="358"/><use href="#pin" x="367.500" y="364"/><use href="#pin" x="360.500" y="369"/><use href="#pin" x="273.500" y="370"/><use href="#pin" x="347" y="371"/><use href="#pin" x="349.500" y="372"/><use href="#pin" x="319.500" y="372"/><use href="#pin" x="256" y="374"/><use href="#pin" x="305.500" y="376"/><use href="#pin" x="247" y="378"/><use href="#pin" x="241" y="380"/><use href="#pin" x="235.500" y="382"/><use href="#pin" x="243" y="390"/><use href="#pin" x="245.500" y="394"/></g>
</svg>
<div class="zoom"><span>+</span><span>−</span></div>
<div class="attribution"><a>Leaflet</a> | © <a>OpenStreetMap</a> contributors</div>
</div>
<h2 class="table-title">Gasolineras en ruta (sin desviarse más de 600m)</h2>
<table><colgroup><col class="c1"><col class="c2"><col class="c3"><col class="c4"><col></colgroup>
<thead><tr><th>NOMBRE</th><th>PRECIO</th><th>PRECIO 50L</th><th>CIUDAD</th><th>DIRECCIÓN</th></tr></thead>
<tbody><tr><td>GASEXPRESS</td><td>1.347€</td><td>67.35€</td><td>ALCALA DE HENARES</td><td>CARRETERA DAGANZO KM. 3</td></tr>
<tr><td>LAVAPLUS</td><td>1.347€</td><td>67.35€</td><td>ALCALA DE HENARES</td><td>CARRERA DE AJALVIR, 3</td></tr></tbody></table>
</section>
</main>
</div>
</body>
</html>
```
FILE: styles.css
```css
* { box-sizing: border-box; }
body { margin: 0; height: 881px; overflow: hidden; background: #fff; color: #1a202c; font-family: "Liberation Sans", Arial, sans-serif; font-size: 16px; line-height: 24px; }
h1, h2, p { margin: 0; }
.page { height: 881px; overflow: hidden; border-top: 1px solid #dadada; border-right: 1px solid #eee; padding: 21px 16px 0 7px; }
.hero { height: 105px; text-align: center; }
h1 { font-size: 30px; line-height: 36px; }
.hero p { color: #718096; margin-top: 4px; }
.layout { display: flex; gap: 23px; align-items: flex-start; padding-left: 24px; }
.card { width: 289px; height: 296px; padding: 11px 13px 20px 12px; border-radius: 8px; box-shadow: 0 1px 2px rgba(0,0,0,.06); }
.card h2, .map-title { font-size: 20px; line-height: 40px; }
.fields { padding: 17px 16px 16px; display: flex; flex-direction: column; align-items: flex-start; gap: 8px; }
.tag { height: 24px; padding: 0 8px; background: #bbf5d2; color: #1c4532; border-radius: 2px; font-size: 14px; line-height: 24px; }
.input { width: 100%; height: 40px; border: 1px solid #e2e8f0; border-radius: 6px; padding: 0 16px; line-height: 38px; }
.buscar { display: block; width: 100%; height: 40px; padding: 0; border: 0; border-radius: 6px; background: #ecc94b; color: #000; font: bold 16px "Liberation Sans", Arial, sans-serif; }
.content { width: 1153px; flex: none; }
.map-title { height: 64px; padding: 11px 12px; }
.map { position: relative; height: 528px; overflow: hidden; background: #f2efe9; }
.tiles { display: block; }
.f { fill: #bddab1; } .g { fill: #cbe8b5; } .h { fill: #d5deb9; } .e { fill: #f2efe9; } .y { fill: #eef1d8; }
.w { fill: #aad3df; } .u { fill: #dddcdb; } .l { fill: #eadfea; } .i { fill: #ecd8d2; }
.lines path { fill: none; stroke-linejoin: round; stroke-linecap: round; }
.lines .b { stroke: #83bd7d; stroke-width: 8; opacity: .8; }
.lines .v { stroke: #aad3df; stroke-width: 5; }
.lines .r { stroke: #bfbebf; stroke-width: 3; }
.lines .s { stroke: #c4c2bf; stroke-width: 3; }
.lines .k { stroke: #858585; stroke-width: 3.500; }
.lines .p { stroke: #f6c27b; stroke-width: 5; }
.lines .t { stroke: #f6957c; stroke-width: 6; }
.lines .m { stroke: #e46e89; stroke-width: 7.500; }
.lines .a { stroke: #b9a1ba; stroke-width: 5; }
.lines .dash { stroke-dasharray: 20 12; }
.lines .a.dash { stroke-width: 3; }
.labels { font-family: "Noto Sans", sans-serif; font-size: 10.300px; fill: #333; text-anchor: middle; paint-order: stroke; stroke: rgba(255,255,255,.65); stroke-width: 2px; }
.labels .big { font-size: 12.800px; } .labels .capital { font-size: 13.900px; }
.labels .wood { fill: #399146; font-style: italic; }
.labels .shield { stroke: none; fill: #6b2440; }
.shield rect { fill: #ebc9d1; stroke: #d998a9; stroke-width: 1; }
.route { fill: none; stroke: #3388ff; stroke-width: 3; stroke-linejoin: round; stroke-linecap: round; }
.zoom { position: absolute; left: 10px; top: 10px; width: 34px; height: 65px; border: 2px solid rgba(0,0,0,.2); border-radius: 4px; background-clip: padding-box; }
.zoom span { display: block; height: 31px; background: #fff; color: #000; text-align: center; font: bold 20px/33px "Liberation Mono", monospace; border-radius: 0 0 2px 2px; }
.zoom span:first-child { height: 30px; border-bottom: 1px solid #ccc; border-radius: 2px 2px 0 0; }
.attribution { position: absolute; right: 0; bottom: 0; height: 16px; padding: 0 5px; background: rgba(255,255,255,.7); color: #333; font-size: 11px; line-height: 16px; }
.attribution a { color: #0078a8; }
.table-title { font-size: 24px; line-height: 36px; }
table { width: 100%; table-layout: fixed; border-collapse: collapse; }
th, td { text-align: left; padding: 0 24px; border-bottom: 1px solid #edf2f7; white-space: nowrap; }
th { height: 40px; padding-top: 1px; font-size: 12px; letter-spacing: .6px; color: #4a5568; }
td { height: 53px; }
.c1 { width: 217px; } .c2 { width: 114px; } .c3 { width: 125px; } .c4 { width: 254px; }
```
